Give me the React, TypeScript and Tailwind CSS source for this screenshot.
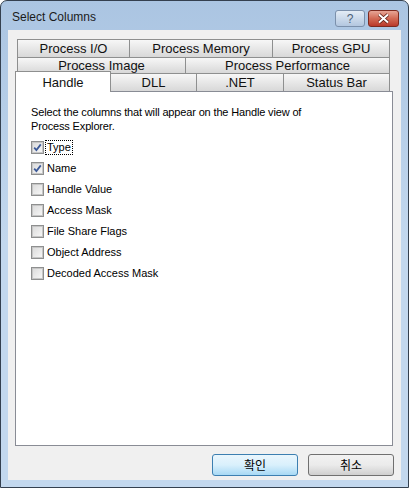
import React from "react";

const tabBase =
  "flex items-center justify-center border-t border-x border-[#8e8f8f] bg-gradient-to-b from-[#f7f7f7] to-[#d8d8d8] text-[13px] leading-none text-[#111]";

const columns = [
  { label: "Type", checked: true, focus: true },
  { label: "Name", checked: true },
  { label: "Handle Value", checked: false },
  { label: "Access Mask", checked: false },
  { label: "File Share Flags", checked: false },
  { label: "Object Address", checked: false },
  { label: "Decoded Access Mask", checked: false },
];

function Checkbox({ checked }: { checked: boolean }) {
  return (
    <div className="flex h-[13px] w-[13px] items-center justify-center border border-[#8e8f8f] bg-white">
      <div className="flex h-[11px] w-[11px] items-center justify-center border border-[#c6c6c6] bg-gradient-to-br from-[#dcdcdc] to-[#f6f6f6]">
        {checked && (
          <svg width="9" height="9" viewBox="0 0 9 9">
            <path
              d="M1.2 4.6 L3.4 7 L7.8 1.4"
              fill="none"
              stroke="#3d5a98"
              strokeWidth="1.8"
            />
          </svg>
        )}
      </div>
    </div>
  );
}

export default function App() {
  return (
    <div className="flex h-[488px] w-[409px] flex-col overflow-hidden rounded-t-[7px] border border-[#34404f] bg-gradient-to-b from-[#abc5e2] via-[#c3d8ee] to-[#c3d8ee] font-['Liberation_Sans',sans-serif]">
      {/* title bar */}
      <div className="flex h-[29px] items-start justify-between pl-[11px] pr-[9px]">
        <span className="mt-[10px] text-[12px] leading-none text-[#1b1b1b]">
          Select Columns
        </span>
        <div className="mt-[9px] flex gap-[3px]">
          <div className="flex h-[17px] w-[30px] items-center justify-center rounded-[3px] border border-[#7b90ab] bg-gradient-to-b from-[#e3ecf6] to-[#b3c7df] text-[12px] leading-none text-[#4b5f78]">
            ?
          </div>
          <div className="flex h-[17px] w-[31px] items-center justify-center rounded-[3px] border border-[#7c2a1f] bg-gradient-to-b from-[#e6a596] via-[#d26a55] to-[#b9382a]">
            <svg width="13" height="11" viewBox="0 0 13 11">
              <path d="M2 1.5 L11 9.5 M11 1.5 L2 9.5" stroke="#5a1d14" strokeWidth="3.6" />
              <path d="M2 1.5 L11 9.5 M11 1.5 L2 9.5" stroke="#ffffff" strokeWidth="2" />
            </svg>
          </div>
        </div>
      </div>

      {/* client area */}
      <div className="mx-[7px] mb-[7px] flex flex-1 flex-col bg-[#f0f0f0]">
        <div className="ml-[9px] mt-[9px] flex flex-col">
          <div className="flex h-[18px]">
            <div className={`${tabBase} w-[113px]`}>Process I/O</div>
            <div className={`${tabBase} -ml-px w-[144px]`}>Process Memory</div>
            <div className={`${tabBase} -ml-px w-[118px]`}>Process GPU</div>
          </div>
          <div className="flex h-[16px]">
            <div className={`${tabBase} w-[169px]`}>Process Image</div>
            <div className={`${tabBase} -ml-px w-[205px]`}>Process Performance</div>
          </div>
          <div className="flex h-[18px] items-start">
            <div className="relative z-10 -ml-[2px] -mt-[2px] flex h-[21px] w-[96px] items-start justify-center border-x border-t border-[#8e8f8f] bg-white pt-[4px] text-[13px] leading-none text-[#111]">
              Handle
            </div>
            <div className={`${tabBase} -ml-px h-[18px] w-[87px]`}>DLL</div>
            <div className={`${tabBase} -ml-px h-[18px] w-[88px]`}>.NET</div>
            <div className={`${tabBase} -ml-px h-[18px] w-[107px]`}>Status Bar</div>
          </div>
        </div>

        {/* panel */}
        <div className="ml-[7px] h-[355px] w-[378px] border border-[#898c95] bg-white pl-[15px] pt-[13px] text-[11px] text-black">
          <p className="leading-[14px] tracking-[-0.15px]">
            Select the columns that will appear on the Handle view of
            <br />
            Process Explorer.
          </p>
          <div className="mt-[8px] flex flex-col gap-[8px]">
            {columns.map((c) => (
              <div key={c.label} className="flex h-[13px] items-center">
                <Checkbox checked={c.checked} />
                <span
                  className={
                    c.focus
                      ? "ml-px border border-dotted border-black px-px leading-[13px]"
                      : "ml-[3px] leading-[13px]"
                  }
                >
                  {c.label}
                </span>
              </div>
            ))}
          </div>
        </div>

        {/* buttons */}
        <div className="mr-[7px] mt-[8px] flex justify-end gap-[10px] font-['Noto_Sans_CJK_KR',sans-serif] text-[12px] text-black">
          <div className="flex h-[22px] w-[86px] items-center justify-center rounded-[3px] border border-[#3c7fb1] bg-gradient-to-b from-[#eaf6fd] via-[#d9f0fc] to-[#a7d9f5] leading-none">
            확인
          </div>
          <div className="flex h-[22px] w-[86px] items-center justify-center rounded-[3px] border border-[#707070] bg-gradient-to-b from-[#f2f2f2] via-[#ebebeb] to-[#cfcfcf] leading-none">
            취소
          </div>
        </div>
      </div>
    </div>
  );
}
